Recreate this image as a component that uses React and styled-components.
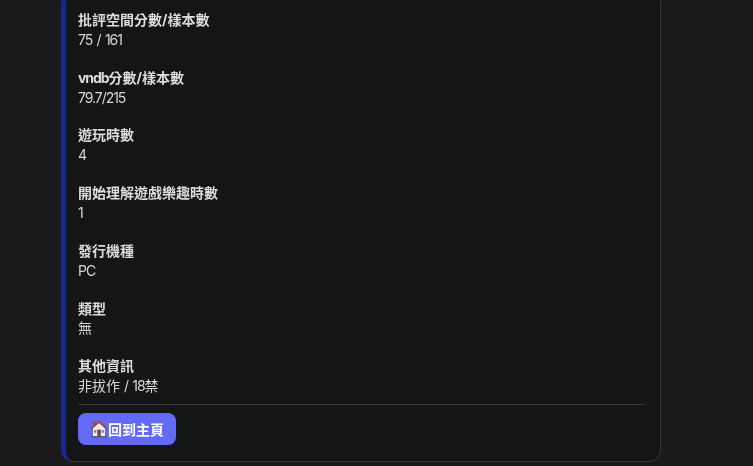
import React from "react";
import styled, { createGlobalStyle } from "styled-components";

const Global = createGlobalStyle`
  html, body { margin: 0; padding: 0; height: 100%; background: #1a1a1a; overflow: hidden; }
  #root { height: 100%; }
`;

const Page = styled.div`
  height: 466px;
  overflow: hidden;
  display: flex;
  flex-direction: column;
  justify-content: flex-end;
  align-items: flex-start;
  padding: 0 0 4px 61px;
  box-sizing: border-box;
  background: #1a1a1a;
  font-family: Inter, "Noto Sans CJK TC", sans-serif;
`;

const Card = styled.main`
  width: 600px;
  flex: none;
  box-sizing: border-box;
  padding: 20px 16px 16px 12px;
  background: #141517;
  border: 1px solid #343537;
  border-left: 5px solid #14288c;
  border-radius: 12px;
  color: #d9d9d9;
  will-change: transform;
`;

const Field = styled.section`
  margin-bottom: 20px;
  &:last-of-type { margin-bottom: 0; }
`;

const Label = styled.h3`
  margin: 0 0 2.8px;
  font-size: 14px;
  line-height: 16px;
  font-weight: 700;
  color: #dcdcdc;
`;

const Value = styled.p`
  margin: 0;
  font-size: 14px;
  line-height: 18.9px;
  font-weight: 400;
  color: #d6d6d6;
`;

const Latin = styled.span`
  letter-spacing: -1.05px;
  word-spacing: 1.5px;
`;

const Divider = styled.hr`
  border: 0;
  border-top: 1px solid #37383a;
  margin: 8px 0 8px;
`;

const HomeButton = styled.a`
  display: inline-flex;
  align-items: center;
  height: 32px;
  padding: 0 12px;
  border-radius: 8px;
  background: #636bf6;
  color: #fff;
  font-size: 14px;
  font-weight: 700;
`;

const HouseIcon = styled.svg`
  width: 18px;
  height: 18px;
  flex: none;
`;

const HouseGlyph = () => (
  <HouseIcon viewBox="0 0 18 18" aria-hidden="true">
    <path d="M3 8 9 2.5 15 8v8.2H3z" fill="#f1ece4" />
    <path d="M9 .6 5.2 4V1.6H3.4v4L.9 8l1 1.2L9 3l7.1 6.2 1-1.2z" fill="#a93f30" />
    <rect x="7.3" y="9.6" width="3.5" height="6.8" fill="#6d4a48" />
    <rect x="11.7" y="10" width="2.3" height="2.8" fill="#7d8fb5" />
    <rect x="4" y="10" width="2.3" height="2.8" fill="#7d8fb5" />
    <rect x="1" y="16.2" width="16" height="1.3" fill="#55565c" />
  </HouseIcon>
);

const fields = [
  ["批評空間分數/樣本數", <Latin>75 / 161</Latin>],
  [<><Latin>vndb</Latin>分數/樣本數</>, <Latin>79.7/215</Latin>],
  ["遊玩時數", "4"],
  ["開始理解遊戲樂趣時數", "1"],
  ["發行機種", <Latin>PC</Latin>],
  ["類型", "無"],
  ["其他資訊", <>非拔作 <Latin>/ 18</Latin>禁</>],
];

export default function App() {
  return (
    <>
      <Global />
      <Page>
        <Card>
          {fields.map(([label, value], index) => (
            <Field key={index}>
              <Label>{label}</Label>
              <Value>{value}</Value>
            </Field>
          ))}
          <Divider />
          <HomeButton>
            <HouseGlyph />
            回到主頁
          </HomeButton>
        </Card>
      </Page>
    </>
  );
}
